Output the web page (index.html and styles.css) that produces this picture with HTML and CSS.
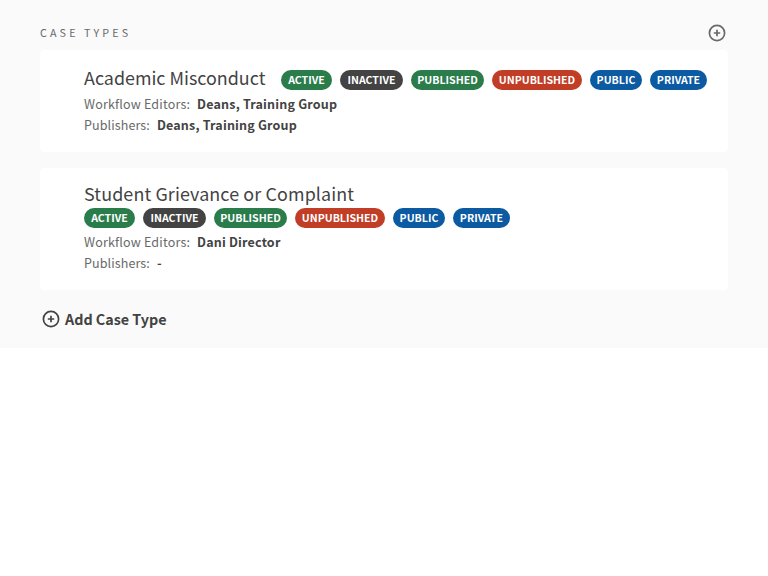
FILE: index.html
```html
<!DOCTYPE html>
<html lang="en">
<head>
<meta charset="utf-8">
<title>Case Types</title>
<link rel="stylesheet" href="styles.css">
</head>
<body>
<main class="panel">
  <header class="panel-header">
    <h1 class="panel-title">CASE TYPES</h1>
    <button class="icon-button" aria-label="Add case type">
      <svg class="icon" viewBox="0 0 18 18"><circle cx="9" cy="9" r="7.6"/><path d="M9 5.8v6.4M5.8 9h6.4"/></svg>
    </button>
  </header>
  <section class="card">
    <div class="heading">
      <h2 class="name">Academic Misconduct</h2>
      <div class="tags">
        <span class="tag green w-active">ACTIVE</span>
        <span class="tag gray w-inactive">INACTIVE</span>
        <span class="tag green w-published">PUBLISHED</span>
        <span class="tag red w-unpublished">UNPUBLISHED</span>
        <span class="tag blue w-public">PUBLIC</span>
        <span class="tag blue w-private">PRIVATE</span>
      </div>
    </div>
    <div class="row"><span class="label">Workflow Editors:</span><strong class="value">Deans, Training Group</strong></div>
    <div class="row"><span class="label short">Publishers:</span><strong class="value">Deans, Training Group</strong></div>
  </section>
  <section class="card">
    <div class="heading stacked">
      <h2 class="name">Student Grievance or Complaint</h2>
      <div class="tags">
        <span class="tag green w-active">ACTIVE</span>
        <span class="tag gray w-inactive">INACTIVE</span>
        <span class="tag green w-published">PUBLISHED</span>
        <span class="tag red w-unpublished">UNPUBLISHED</span>
        <span class="tag blue w-public">PUBLIC</span>
        <span class="tag blue w-private">PRIVATE</span>
      </div>
    </div>
    <div class="row"><span class="label">Workflow Editors:</span><strong class="value">Dani Director</strong></div>
    <div class="row"><span class="label short">Publishers:</span><strong class="value">-</strong></div>
  </section>
  <button class="add-button">
    <svg class="icon" viewBox="0 0 18 18"><circle cx="9" cy="9" r="7.6"/><path d="M9 5.8v6.4M5.8 9h6.4"/></svg>
    <span>Add Case Type</span>
  </button>
</main>
</body>
</html>
```
FILE: styles.css
```css
* { box-sizing: border-box; }
body {
  margin: 0;
  background: #fff;
  color: #434343;
  font-family: "Source Sans Pro", "Noto Sans CJK SC", "Noto Sans", sans-serif;
}
h1, h2 { margin: 0; font-weight: 400; }
button { border: 0; padding: 0; background: none; font: inherit; color: inherit; display: flex; align-items: center; }
.icon { width: 18px; height: 18px; fill: none; stroke: currentColor; stroke-width: 1.7; display: block; }
.panel { height: 348px; padding: 16px 40px 0; background: #fafafa; }
.panel-header { height: 34px; padding-right: 2px; display: flex; align-items: center; justify-content: space-between; color: #696969; }
.panel-title { font-size: 10.74px; line-height: 20px; letter-spacing: 3.12px; }
.card { background: #fff; border-radius: 4px; padding: 16px 20px 16px 44px; margin-bottom: 16px; }
.heading { display: flex; gap: 16px; height: 28px; align-items: center; }
.heading.stacked { flex-direction: column; align-items: flex-start; gap: 0; height: 48px; }
.name { width: 181px; height: 24px; font-size: 17.9px; line-height: 18px; white-space: nowrap; }
.stacked .name { width: auto; letter-spacing: 0.12px; }
.tags { display: flex; gap: 8px; }
.tag { height: 20px; border-radius: 10px; color: #fff; font-size: 10.6px; font-weight: 600; line-height: 19px; text-align: center; white-space: nowrap; }
.green { background: #2a7d4b; }
.gray { background: #434343; }
.red { background: #c13d25; }
.blue { background: #0b5aa2; }
.w-active { width: 51px; }
.w-inactive { width: 63px; }
.w-published { width: 73px; }
.w-unpublished { width: 90px; }
.w-public { width: 52px; }
.w-private { width: 57px; }
.row { display: flex; gap: 7px; height: 21px; font-size: 12.53px; line-height: 20px; letter-spacing: 0.18px; }
.label { color: #696969; }
.short { letter-spacing: 0.1px; }
.value { font-weight: 600; }
.add-button { height: 26px; margin-left: 2px; gap: 5px; font-size: 14.32px; font-weight: 600; line-height: 26px; }
```
